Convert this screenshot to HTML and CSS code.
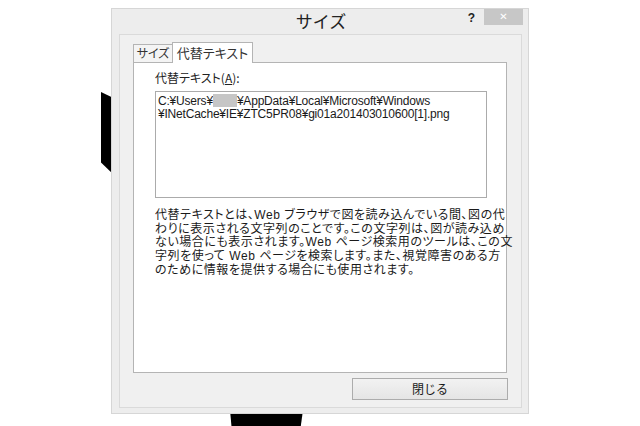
FILE: index.html
```html
<!DOCTYPE html>
<html lang="ja">
<head>
<meta charset="utf-8">
<title>サイズ</title>
<link rel="stylesheet" href="styles.css">
</head>
<body>
<div class="stage">
  <div class="shape shape-left"></div>
  <div class="shape shape-bottom"></div>
  <div class="dialog">
    <div class="titlebar">
      <div></div>
      <div class="title">サイズ</div>
      <div class="controls">
        <span class="help">?</span>
        <span class="close">✕</span>
      </div>
    </div>
    <div class="client">
      <div class="tabs">
        <div class="tab">サイズ</div>
        <div class="tab active">代替テキスト</div>
      </div>
      <div class="panel">
        <div class="label">代替テキスト(<u>A</u>):</div>
        <div class="textbox">C:¥Users¥<span class="redact"></span>¥AppData¥Local¥Microsoft¥Windows<br>¥INetCache¥IE¥ZTC5PR08¥gi01a201403010600[1].png</div>
        <p class="desc">代替テキストとは、Web ブラウザで図を読み込んでいる間、図の代<br>わりに表示される文字列のことです。この文字列は、図が読み込め<br>ない場合にも表示されます。Web ページ検索用のツールは、この文<br>字列を使って Web ページを検索します。また、視覚障害のある方<br>のために情報を提供する場合にも使用されます。</p>
      </div>
      <div class="actions">
        <button class="btn">閉じる</button>
      </div>
    </div>
  </div>
</div>
</body>
</html>
```
FILE: styles.css
```css
* { box-sizing: border-box; }
html, body { margin: 0; padding: 0; background: #ffffff; }
body {
  width: 640px;
  height: 426px;
  overflow: hidden;
  font-family: "Liberation Sans", "Noto Sans CJK JP", sans-serif;
  color: #1a1a1a;
}
.stage {
  position: relative;
  width: 640px;
  height: 426px;
  padding: 8px 0 0 111px;
}
.shape {
  position: absolute;
  background: #000;
}
.shape-left {
  left: 101px;
  top: 92px;
  width: 14px;
  height: 84px;
  clip-path: polygon(0 0, 100% 8%, 100% 100%, 0 84%);
}
.shape-bottom {
  left: 230px;
  top: 410px;
  width: 73px;
  height: 16px;
  clip-path: polygon(0 0, 100% 0, 97% 100%, 2% 100%);
}
.dialog {
  position: relative;
  width: 418px;
  height: 406px;
  background: #ededed;
  border: 1px solid #d6d6d6;
  padding: 0 6px 5px 7px;
  display: flex;
  flex-direction: column;
}
.titlebar {
  height: 25px;
  display: grid;
  grid-template-columns: 1fr auto 1fr;
  align-items: start;
  margin: 0 -6px 0 -7px;
}
.title {
  font-family: "Noto Sans CJK JP", sans-serif;
  font-size: 17px;
  line-height: 24px;
  color: #222;
  padding-left: 2px;
}
.controls {
  display: flex;
  justify-content: flex-end;
  align-items: flex-start;
  padding-right: 5px;
}
.help {
  font-family: "Liberation Sans", sans-serif;
  font-weight: bold;
  font-size: 12px;
  line-height: 14px;
  margin-top: 2px;
  margin-right: 9px;
  color: #222;
}
.close {
  width: 39px;
  height: 16px;
  background: #c7c7c7;
  color: #ffffff;
  font-size: 10px;
  line-height: 16px;
  text-align: center;
  font-family: "DejaVu Sans", sans-serif;
}
.client {
  flex: 1;
  background: #f0f0f0;
  border: 1px solid #dadada;
  padding: 7px 14px 7px 13px;
  display: flex;
  flex-direction: column;
}
.tabs {
  display: flex;
  align-items: flex-end;
  height: 20px;
  position: relative;
  z-index: 1;
}
.tab {
  font-family: "Noto Sans CJK JP", sans-serif;
  font-feature-settings: "palt";
  font-size: 12px;
  line-height: 16px;
  height: 18px;
  width: 39px;
  text-align: center;
  border: 1px solid #b4b4b4;
  border-bottom: none;
  border-right: none;
  background: #f4f4f4;
  color: #333;
}
.tab.active {
  width: 81px;
  height: 21px;
  margin-bottom: -1px;
  background: #ffffff;
  border-right: 1px solid #b4b4b4;
  font-size: 13px;
  line-height: 19px;
}
.panel {
  height: 311px;
  background: #ffffff;
  border: 1px solid #b4b4b4;
  padding: 8px 19px 0 21px;
}
.label {
  font-family: "Noto Sans CJK JP", sans-serif;
  font-feature-settings: "palt";
  font-size: 12px;
  line-height: 14px;
  color: #222;
}
.label u { text-decoration-thickness: 1px; text-underline-offset: 1px; }
.textbox {
  margin-top: 6px;
  width: 332px;
  height: 107px;
  border: 1px solid #ababab;
  padding: 2px 0 0 2px;
  font-size: 12px;
  line-height: 13px;
  color: #1a1a1a;
  white-space: nowrap;
  overflow: hidden;
  letter-spacing: -0.2px;
}
.redact {
  display: inline-block;
  width: 24px;
  height: 13px;
  background: #c6c6c6;
  vertical-align: -2px;
}
.desc {
  margin: 11px 0 0 0;
  font-family: "Liberation Sans", "Noto Sans CJK JP", sans-serif;
  font-feature-settings: "palt";
  font-size: 12px;
  line-height: 13.7px;
  letter-spacing: 0.55px;
  white-space: nowrap;
  color: #1a1a1a;
}
.actions {
  display: flex;
  justify-content: flex-end;
  margin-top: 5px;
  margin-right: -1px;
}
.btn {
  width: 156px;
  height: 22px;
  border: 1px solid #acacac;
  background: linear-gradient(#f2f2f2, #e5e5e5);
  font-family: "Noto Sans CJK JP", sans-serif;
  font-size: 12px;
  line-height: 18px;
  color: #1a1a1a;
  padding: 0;
}
```
